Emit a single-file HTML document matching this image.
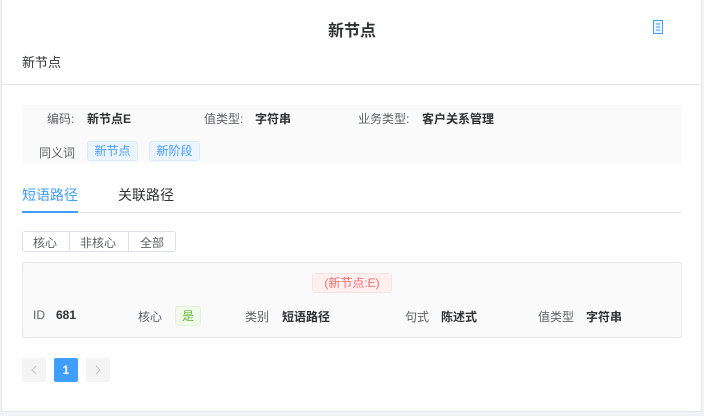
<!DOCTYPE html>
<html><head><meta charset="utf-8"><style>
*{margin:0;padding:0;box-sizing:border-box}
body{width:704px;height:416px;background:#f0f2f5;font-family:"Liberation Sans","Noto Sans CJK SC",sans-serif;font-size:12px;color:#333;position:relative;overflow:hidden}
.card{position:absolute;left:1px;top:0;width:701px;height:412px;background:#fff;border:1px solid #e4e7ed;border-top:none}
.a{position:absolute;white-space:nowrap}
.g{color:#606266}
.b{font-weight:bold;color:#303133}
.tag{position:absolute;height:20px;line-height:18px;border:1px solid #d9ecff;background:#ecf5ff;color:#409eff;border-radius:3px;text-align:center;font-size:12px}
</style></head><body>
<div class="card"></div>
<div class="a" style="left:0;width:704px;text-align:center;top:17px;font-size:16px;font-weight:bold;color:#303133">新节点</div>
<svg class="a" style="left:653px;top:20px" width="10" height="14" viewBox="0 0 10 14"><rect x="0.5" y="0.5" width="9" height="13" fill="#ecf5ff" stroke="#409eff"/><line x1="3" y1="4" x2="7" y2="4" stroke="#409eff"/><line x1="3" y1="7" x2="7" y2="7" stroke="#409eff"/><line x1="3" y1="10" x2="7" y2="10" stroke="#409eff"/></svg>
<div class="a" style="left:22px;top:52px;font-size:13px;color:#303133">新节点</div>
<div class="a" style="left:2px;top:84px;width:700px;height:1px;background:#e4e7ed"></div>
<div class="a" style="left:22px;top:105px;width:660px;height:58px;background:#fafafa"></div>
<div class="a g" style="left:47px;top:110px">编码:</div><div class="a b" style="left:87px;top:110px">新节点E</div>
<div class="a g" style="left:204px;top:110px">值类型:</div><div class="a b" style="left:255px;top:110px">字符串</div>
<div class="a g" style="left:358px;top:110px">业务类型:</div><div class="a b" style="left:422px;top:110px">客户关系管理</div>
<div class="a g" style="left:39px;top:144px">同义词</div>
<div class="tag" style="left:87px;top:141px;width:51px">新节点</div>
<div class="tag" style="left:149px;top:141px;width:51px">新阶段</div>
<div class="a" style="left:22px;top:185px;font-size:14px;color:#409eff">短语路径</div>
<div class="a" style="left:118px;top:185px;font-size:14px;color:#303133">关联路径</div>
<div class="a" style="left:22px;top:212px;width:660px;height:1px;background:#e4e7ed"></div>
<div class="a" style="left:22px;top:211px;width:56px;height:2px;background:#409eff"></div>
<div class="a" style="left:22px;top:231px;width:154px;height:21px;border:1px solid #dcdfe6;border-radius:3px;background:#fff"></div>
<div class="a" style="left:69px;top:231px;width:1px;height:21px;background:#dcdfe6"></div>
<div class="a" style="left:128px;top:231px;width:1px;height:21px;background:#dcdfe6"></div>
<div class="a g" style="left:33px;top:234px">核心</div>
<div class="a g" style="left:80px;top:234px">非核心</div>
<div class="a g" style="left:140px;top:234px">全部</div>
<div class="a" style="left:22px;top:262px;width:660px;height:76px;background:#fafafa;border:1px solid #e4e7ed;border-radius:3px"></div>
<div class="a" style="left:312px;top:273px;width:80px;height:20px;border:1px solid #fde2e2;background:#fef0f0;color:#f56c6c;border-radius:3px;text-align:center;line-height:18px">(新节点:E)</div>
<div class="a g" style="left:33px;top:308px">ID</div><div class="a b" style="left:56px;top:308px">681</div>
<div class="a g" style="left:138px;top:308px">核心</div>
<div class="a" style="left:175px;top:306px;width:26px;height:20px;border:1px solid #e1f3d8;background:#f0f9eb;color:#67c23a;border-radius:3px;text-align:center;line-height:18px">是</div>
<div class="a g" style="left:245px;top:308px">类别</div><div class="a b" style="left:282px;top:308px">短语路径</div>
<div class="a g" style="left:405px;top:308px">句式</div><div class="a b" style="left:441px;top:308px">陈述式</div>
<div class="a g" style="left:538px;top:308px">值类型</div><div class="a b" style="left:586px;top:308px">字符串</div>
<div class="a" style="left:22px;top:358px;width:24px;height:24px;background:#f4f4f5"><svg width="24" height="24"><path d="M14 8 L10 12 L14 16" fill="none" stroke="#c0c4cc" stroke-width="1"/></svg></div>
<div class="a" style="left:54px;top:358px;width:24px;height:24px;background:#409eff;color:#fff;text-align:center;line-height:24px;font-weight:bold;border-radius:2px">1</div>
<div class="a" style="left:86px;top:358px;width:24px;height:24px;background:#f4f4f5"><svg width="24" height="24"><path d="M10 8 L14 12 L10 16" fill="none" stroke="#c0c4cc" stroke-width="1"/></svg></div>
</body></html>
